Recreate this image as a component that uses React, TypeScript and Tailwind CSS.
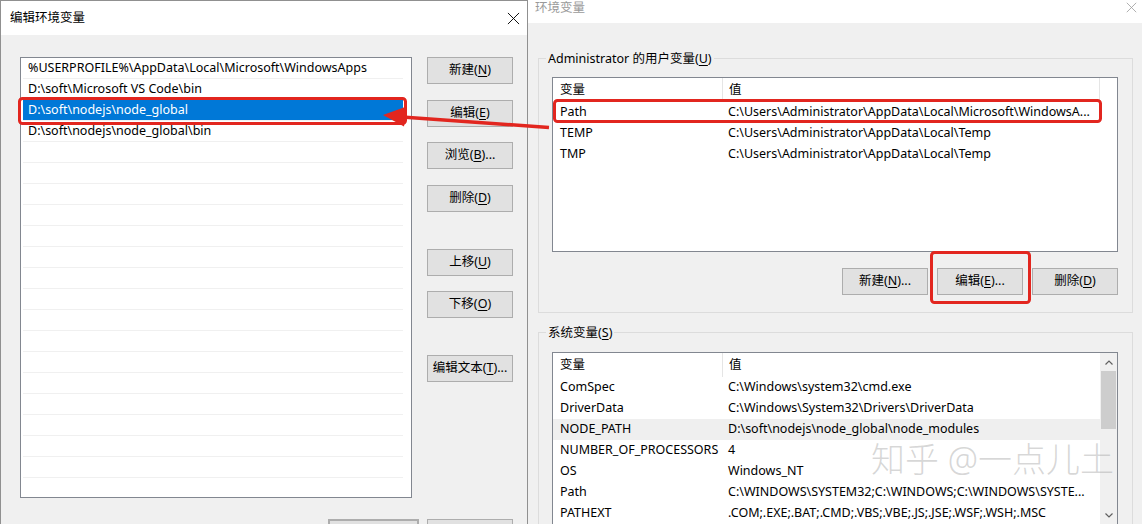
import type { ReactNode } from "react";

const pathEntries = [
  "%USERPROFILE%\\AppData\\Local\\Microsoft\\WindowsApps",
  "D:\\soft\\Microsoft VS Code\\bin",
  "D:\\soft\\nodejs\\node_global",
  "D:\\soft\\nodejs\\node_global\\bin",
];

const userVars = [
  ["Path", "C:\\Users\\Administrator\\AppData\\Local\\Microsoft\\WindowsA..."],
  ["TEMP", "C:\\Users\\Administrator\\AppData\\Local\\Temp"],
  ["TMP", "C:\\Users\\Administrator\\AppData\\Local\\Temp"],
];

const sysVars = [
  ["ComSpec", "C:\\Windows\\system32\\cmd.exe"],
  ["DriverData", "C:\\Windows\\System32\\Drivers\\DriverData"],
  ["NODE_PATH", "D:\\soft\\nodejs\\node_global\\node_modules"],
  ["NUMBER_OF_PROCESSORS", "4"],
  ["OS", "Windows_NT"],
  ["Path", "C:\\WINDOWS\\SYSTEM32;C:\\WINDOWS;C:\\WINDOWS\\SYSTE..."],
  ["PATHEXT", ".COM;.EXE;.BAT;.CMD;.VBS;.VBE;.JS;.JSE;.WSF;.WSH;.MSC"],
];

function Key({ label, k, tail = "" }: { label: string; k: string; tail?: string }) {
  return (
    <>
      {label}(<span className="underline underline-offset-2">{k}</span>){tail}
    </>
  );
}

function Btn({ children, className = "" }: { children?: ReactNode; className?: string }) {
  return (
    <div
      className={`flex h-[27px] shrink-0 items-center justify-center whitespace-nowrap border border-[#adadad] bg-[#e1e1e1] ${className}`}
    >
      {children}
    </div>
  );
}

function CloseX({ className = "" }: { className?: string }) {
  return (
    <svg viewBox="0 0 14 14" className={className} fill="none" aria-hidden="true">
      <path d="M1 1l12 12M13 1L1 13" stroke="currentColor" strokeWidth="1" />
    </svg>
  );
}

function Group({ label, children, className = "" }: { label: ReactNode; children: ReactNode; className?: string }) {
  return (
    <div className={`shrink-0 border border-[#dcdcdc] ${className}`}>
      <div className="-mt-[9px] ml-[7px] w-fit bg-[#f0f0f0] px-[2px] leading-[17px]">{label}</div>
      <div className="pl-[13px] pr-[14px]">{children}</div>
    </div>
  );
}

function VarTable({
  rows,
  scroll = false,
  hi = -1,
  className = "",
}: {
  rows: string[][];
  scroll?: boolean;
  hi?: number;
  className?: string;
}) {
  return (
    <div className={`flex overflow-hidden border border-[#828790] bg-white ${className}`}>
      <div className="min-w-0 flex-1">
        <div className="flex h-[24px] items-center">
          <div className="w-[169px] pl-[7px]">变量</div>
          <div
            className={`flex h-full items-center border-l border-[#e5e5e5] pl-[6px] ${
              scroll ? "flex-1" : "w-[378px] border-r"
            }`}
          >
            值
          </div>
        </div>
        {rows.map(([name, value], i) => (
          <div
            key={name + i}
            className={`flex h-[21px] items-center whitespace-nowrap ${i === hi ? "bg-[#efefef]" : ""}`}
          >
            <div className="w-[169px] shrink-0 pl-[7px]">{name}</div>
            <div className="pl-[6px]">{value}</div>
          </div>
        ))}
      </div>
      {scroll && (
        <div className="flex w-[17px] flex-col bg-[#f0f0f0]">
          <div className="flex h-[18px] items-center justify-center text-[#606060]">
            <svg viewBox="0 0 8 5" className="h-[5px] w-[8px]" fill="none">
              <path d="M0.5 4.5L4 1l3.5 3.5" stroke="currentColor" strokeWidth="1.2" />
            </svg>
          </div>
          <div className="mx-[1px] h-[58px] bg-[#cdcdcd]" />
          <div className="flex-1" />
          <div className="flex h-[18px] items-center justify-center text-[#606060]">
            <svg viewBox="0 0 8 5" className="h-[5px] w-[8px]" fill="none">
              <path d="M0.5 0.5L4 4l3.5-3.5" stroke="currentColor" strokeWidth="1.2" />
            </svg>
          </div>
        </div>
      )}
    </div>
  );
}

export default function App() {
  return (
    <div className="relative flex h-[524px] w-[1142px] overflow-hidden bg-[#f0f0f0] font-['Noto_Sans','Noto_Sans_CJK_SC',sans-serif] text-[12.5px] leading-none text-black">
      {/* 编辑环境变量 */}
      <div className="flex w-[528px] shrink-0 flex-col border-x border-t border-[#909090]">
        <div className="flex h-[34px] shrink-0 items-center justify-between bg-white pl-[9px] pr-[7px]">
          <span>编辑环境变量</span>
          <CloseX className="h-[13px] w-[13px]" />
        </div>
        <div className="flex shrink-0 flex-col bg-[#f0f0f0] pl-[19px] pr-[14px] pt-[22px]">
          <div className="flex items-start">
            <div className="h-[441px] w-[392px] shrink-0 border border-[#828790] bg-white pl-[2px] pr-[8px]">
              {Array.from({ length: 20 }).map((_, i) => (
                <div
                  key={i}
                  className={`flex h-[21px] items-center whitespace-nowrap border-b border-[#f0f0f0] pl-[5px] ${
                    i === 2 ? "bg-[#0078d7] text-white" : ""
                  }`}
                >
                  {pathEntries[i] ?? ""}
                </div>
              ))}
            </div>
            <div className="ml-[15px] flex w-[86px] flex-col">
              <Btn><Key label="新建" k="N" /></Btn>
              <Btn className="mt-[16px]"><Key label="编辑" k="E" /></Btn>
              <Btn className="mt-[15px]"><Key label="浏览" k="B" tail="..." /></Btn>
              <Btn className="mt-[16px]"><Key label="删除" k="D" /></Btn>
              <Btn className="mt-[37px]"><Key label="上移" k="U" /></Btn>
              <Btn className="mt-[15px]"><Key label="下移" k="O" /></Btn>
              <Btn className="mt-[37px]"><Key label="编辑文本" k="T" tail="..." /></Btn>
            </div>
          </div>
          {/* OK / Cancel, only their top edges are in view */}
          <div className="mt-[21px] flex justify-end gap-[8px]">
            <Btn className="w-[91px] border-2 border-[#0078d7]" />
            <Btn className="w-[86px]" />
          </div>
        </div>
      </div>

      {/* 环境变量 */}
      <div className="flex min-w-0 flex-1 flex-col">
        <div className="flex h-[23px] shrink-0 items-start justify-between bg-white pl-[7px] pr-[5px] pt-[2px] text-[#9a9a9a]">
          <span>环境变量</span>
          <CloseX className="h-[11px] w-[11px]" />
        </div>
        <div className="flex shrink-0 flex-col bg-[#f0f0f0] pl-[10px] pr-[9px] pt-[35px]">
          <Group label={<Key label="Administrator 的用户变量" k="U" />} className="pb-[17px]">
            <VarTable rows={userVars} className="mt-[10px] h-[175px]" />
            <div className="mt-[16px] flex justify-end gap-[9px]">
              <Btn className="w-[86px]"><Key label="新建" k="N" tail="..." /></Btn>
              <Btn className="w-[86px]"><Key label="编辑" k="E" tail="..." /></Btn>
              <Btn className="w-[86px]"><Key label="删除" k="D" /></Btn>
            </div>
          </Group>
          <Group label={<Key label="系统变量" k="S" />} className="mt-[19px] pb-[20px]">
            <VarTable rows={sysVars} scroll hi={2} className="mt-[11px] h-[173px]" />
          </Group>
        </div>
      </div>

      {/* watermark */}
      <div className="pointer-events-none absolute left-[871px] top-[442px] whitespace-nowrap text-[34px] font-light leading-none text-[rgba(150,150,150,0.38)]">
        知乎 @一点儿土
      </div>

      {/* red annotations */}
      <svg
        className="pointer-events-none absolute inset-0 h-full w-full"
        viewBox="0 0 1142 524"
        fill="none"
        aria-hidden="true"
      >
        <rect x="19.5" y="98.5" width="386" height="25" rx="3" stroke="#e2261f" strokeWidth="3" />
        <rect x="554.5" y="100.5" width="546" height="21" rx="3" stroke="#e2261f" strokeWidth="3" />
        <rect x="931.5" y="252.5" width="98" height="50" rx="3" stroke="#e2261f" strokeWidth="3" />
        <path d="M549 127.5L402 117" stroke="#e2261f" strokeWidth="3.5" />
        <path d="M383 115L406.5 106.5L404 126.5Z" fill="#e2261f" />
      </svg>
    </div>
  );
}
